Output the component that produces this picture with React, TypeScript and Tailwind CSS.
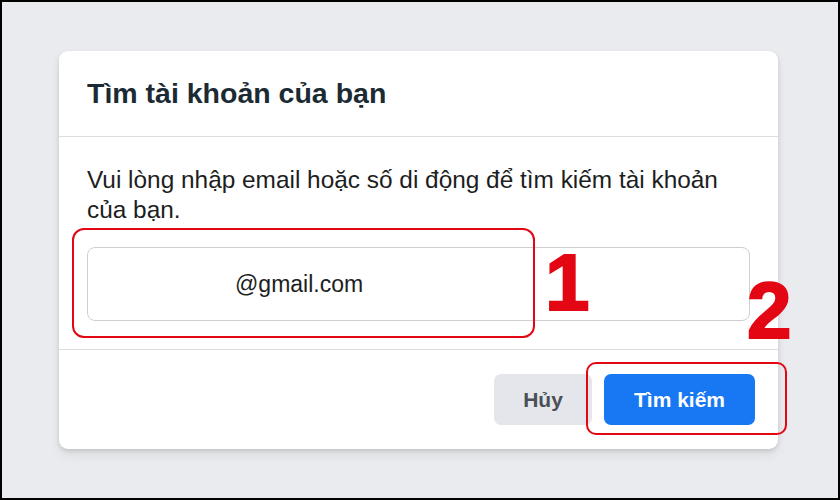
export default function App() {
  return (
    <div
      className="relative h-[500px] w-[840px] overflow-hidden border-2 border-black bg-[#e9ebee]"
      style={{ fontFamily: '"Liberation Sans", Arial, sans-serif' }}
    >
      <div className="ml-[57px] mt-[49px] w-[719px] rounded-[9px] bg-white shadow-[0_2px_4px_rgba(0,0,0,0.12),0_6px_12px_rgba(0,0,0,0.06)]">
        {/* Header */}
        <div className="flex h-[86px] items-center border-b border-[#dadde1] px-[28px]">
          <h2 className="text-[28.5px] font-bold leading-none text-[#1c2b33]">Tìm tài khoản của bạn</h2>
        </div>

        {/* Body */}
        <div className="border-b border-[#dadde1] px-[28px] pb-[28px] pt-[28px]">
          <p className="text-[24.4px] leading-[30px] text-[#1c1e21]">
            Vui lòng nhập email hoặc số di động để tìm kiếm tài khoản của bạn.
          </p>
          <div className="mt-[22px] flex h-[74px] items-center rounded-[8px] border border-[#ccd0d5] pl-[147px] text-[23px] text-[#1c1e21]">
            @gmail.com
          </div>
        </div>

        {/* Footer */}
        <div className="flex justify-end gap-[12px] px-[23px] py-[24px]">
          <button className="h-[51px] w-[98px] rounded-[7px] bg-[#e4e6eb] text-[21px] font-bold text-[#4b4f56]">
            Hủy
          </button>
          <button className="h-[51px] w-[151px] rounded-[7px] bg-[#1877f2] text-[21px] font-bold text-white">
            Tìm kiếm
          </button>
        </div>
      </div>

      {/* Annotations */}
      <div className="absolute left-[70px] top-[226px] h-[110px] w-[463px] rounded-[12px] border-[2.5px] border-[#e30613]" />
      <div className="absolute left-[584px] top-[360px] h-[73px] w-[201px] rounded-[10px] border-[2.5px] border-[#e30613]" />
      <span className="absolute left-[543px] top-[241px] text-[80px] font-bold leading-none text-[#e30613] [-webkit-text-stroke:2px_#e30613]">1</span>
      <span className="absolute left-[745px] top-[269px] text-[80px] font-bold leading-none text-[#e30613] [-webkit-text-stroke:2px_#e30613]">2</span>
    </div>
  );
}
